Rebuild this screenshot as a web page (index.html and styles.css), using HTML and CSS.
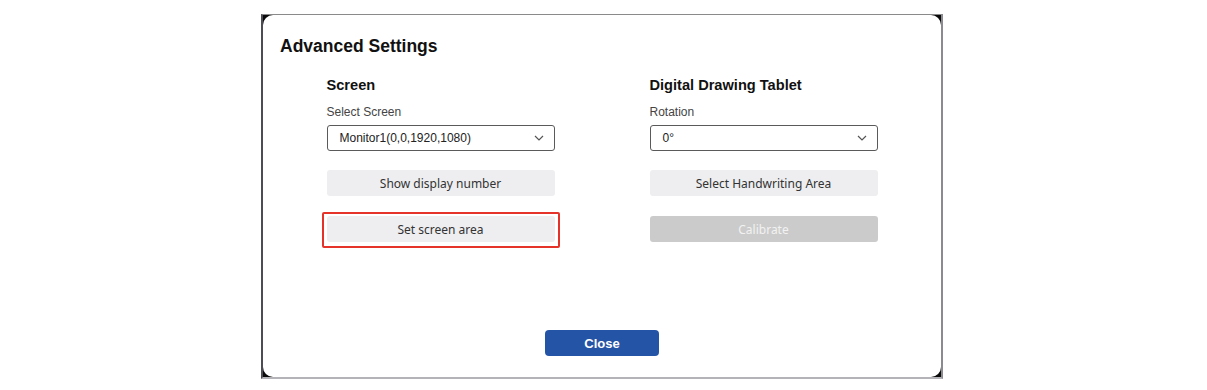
FILE: index.html
```html
<!DOCTYPE html>
<html>
<head>
<meta charset="utf-8">
<link rel="stylesheet" href="styles.css">
</head>
<body>
<div class="frame">
  <div class="dialog">
    <h1 class="title">Advanced Settings</h1>
    <div class="columns">
      <section class="col">
        <h2 class="col-title">Screen</h2>
        <div class="label">Select Screen</div>
        <div class="select">
          <span>Monitor1(0,0,1920,1080)</span>
          <svg class="chev" width="10" height="6" viewBox="0 0 10 6"><path d="M1 1 L5 5 L9 1" fill="none" stroke="#555" stroke-width="1.2"/></svg>
        </div>
        <button class="btn">Show display number</button>
        <button class="btn btn-hl">Set screen area</button>
      </section>
      <section class="col">
        <h2 class="col-title">Digital Drawing Tablet</h2>
        <div class="label">Rotation</div>
        <div class="select">
          <span>0°</span>
          <svg class="chev" width="10" height="6" viewBox="0 0 10 6"><path d="M1 1 L5 5 L9 1" fill="none" stroke="#555" stroke-width="1.2"/></svg>
        </div>
        <button class="btn">Select Handwriting Area</button>
        <button class="btn btn-disabled">Calibrate</button>
      </section>
    </div>
    <div class="footer">
      <button class="close">Close</button>
    </div>
  </div>
</div>
</body>
</html>
```

FILE: styles.css
```css
html, body {
  margin: 0;
  padding: 0;
  background: #ffffff;
}
body {
  padding: 14px 0 0 261px;
  font-family: "Liberation Sans", Arial, sans-serif;
}
.frame {
  width: 678px;
  height: 362px;
  border-left: 2px solid #4c4c55;
  border-top: 1px solid #8a8a8a;
  border-right: 2px solid #8a8a90;
  border-bottom: 2px solid #b4b4b8;
  background: #0a0a0a;
}
.dialog {
  height: 100%;
  background: #ffffff;
  border-radius: 10px;
  box-sizing: border-box;
  padding: 21px 0 21px 17px;
  display: flex;
  flex-direction: column;
}
.title {
  margin: 0;
  font-size: 17.5px;
  line-height: 20px;
  font-weight: bold;
  color: #111;
}
.columns {
  display: grid;
  grid-template-columns: 228px 228px;
  column-gap: 95px;
  justify-content: center;
  margin-top: 20px;
  margin-left: -17px;
}
.col {
  display: flex;
  flex-direction: column;
}
.col-title {
  margin: 0;
  font-size: 14.6px;
  line-height: 18px;
  font-weight: bold;
  color: #111;
}
.label {
  margin-top: 10px;
  font-size: 12px;
  line-height: 16px;
  color: #444;
}
.select {
  margin-top: 5px;
  height: 26px;
  box-sizing: border-box;
  border: 1px solid #5a5a5a;
  border-radius: 3px;
  display: flex;
  align-items: center;
  justify-content: space-between;
  padding: 0 10px 0 12px;
  font-size: 12px;
  color: #222;
}
.chev {
  display: block;
}
.btn {
  margin-top: 19px;
  height: 26px;
  border: none;
  border-radius: 3px;
  background: #eeeef0;
  font-family: "Noto Sans", "Open Sans", sans-serif;
  font-size: 12px;
  color: #333;
  padding: 0;
}
.btn + .btn {
  margin-top: 20px;
}
.btn-hl {
  position: relative;
}
.btn-hl::after {
  content: "";
  position: absolute;
  left: -5px;
  right: -5px;
  top: -4px;
  bottom: -6px;
  border: 2px solid #e5332a;
  border-radius: 2px;
}
.btn-disabled {
  background: #cbcbcb;
  color: #f2f2f2;
}
.footer {
  margin-top: auto;
  margin-left: -17px;
  display: flex;
  justify-content: center;
}
.close {
  width: 114px;
  height: 26px;
  border: none;
  border-radius: 4px;
  background: #2454a6;
  color: #fff;
  font-family: "Liberation Sans", Arial, sans-serif;
  font-weight: bold;
  font-size: 13px;
  padding: 0;
}
```
